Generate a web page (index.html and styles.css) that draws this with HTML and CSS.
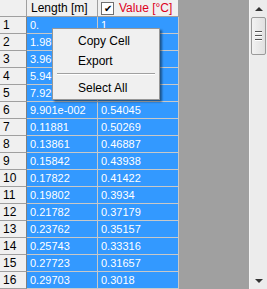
FILE: index.html
```html
<!DOCTYPE html>
<html lang="en">

<head>
    <meta charset="UTF-8">
    <title>Data Grid</title>
    <link rel="stylesheet" href="styles.css">
</head>

<body>
    <div class="window">
        <div class="grid-area">
            <div class="grid">
                <div class="head corner"></div>
                <div class="head">Length [m]</div>
                <div class="head value-head"><span class="check">&#10004;</span>Value [°C]</div>

                <div class="rowhead">1</div><div class="cell">0.</div><div class="cell">1</div>
                <div class="rowhead">2</div><div class="cell">1.980e-002</div><div class="cell"></div>
                <div class="rowhead">3</div><div class="cell">3.960e-002</div><div class="cell"></div>
                <div class="rowhead">4</div><div class="cell">5.940e-002</div><div class="cell"></div>
                <div class="rowhead">5</div><div class="cell">7.920e-002</div><div class="cell"></div>
                <div class="rowhead">6</div><div class="cell">9.901e-002</div><div class="cell">0.54045</div>
                <div class="rowhead">7</div><div class="cell">0.11881</div><div class="cell">0.50269</div>
                <div class="rowhead">8</div><div class="cell">0.13861</div><div class="cell">0.46887</div>
                <div class="rowhead">9</div><div class="cell">0.15842</div><div class="cell">0.43938</div>
                <div class="rowhead">10</div><div class="cell">0.17822</div><div class="cell">0.41422</div>
                <div class="rowhead">11</div><div class="cell">0.19802</div><div class="cell">0.3934</div>
                <div class="rowhead">12</div><div class="cell">0.21782</div><div class="cell">0.37179</div>
                <div class="rowhead">13</div><div class="cell">0.23762</div><div class="cell">0.35157</div>
                <div class="rowhead">14</div><div class="cell">0.25743</div><div class="cell">0.33316</div>
                <div class="rowhead">15</div><div class="cell">0.27723</div><div class="cell">0.31657</div>
                <div class="rowhead">16</div><div class="cell">0.29703</div><div class="cell">0.3018</div>
            </div>

            <!-- Menu contextual sobre la tabla -->
            <div class="menu">
                <div class="menu-item">Copy Cell</div>
                <div class="menu-item">Export</div>
                <div class="menu-sep"></div>
                <div class="menu-item">Select All</div>
            </div>
        </div>

        <div class="scrollbar">
            <div class="arrow arrow-up"></div>
            <div class="thumb">
                <span></span><span></span><span></span>
            </div>
            <div class="track"></div>
            <div class="arrow arrow-down"></div>
        </div>
    </div>
</body>

</html>
```

FILE: styles.css
```css
body {
    margin: 0;
    padding: 0;
    font-family: "Liberation Sans", Arial, sans-serif;
    font-size: 11px;
    background-color: #a0a0a0;
}

.window {
    display: flex;
    width: 267px;
    height: 289px;
    overflow: hidden;
}

.grid-area {
    position: relative;
    flex: 1;
    background-color: #a0a0a0;
}

.grid {
    display: grid;
    grid-template-columns: 27px 71px 81px;
    grid-auto-rows: 17px;
    width: 179px;
}

.head {
    background-color: #f0f0f0;
    color: #000;
    border-right: 1px solid #a0a0a0;
    border-bottom: 1px solid #a0a0a0;
    line-height: 16px;
    padding-left: 4px;
    font-size: 12px;
    white-space: nowrap;
    overflow: hidden;
}

.corner {
    padding: 0;
}

.value-head {
    display: flex;
    align-items: center;
    color: #dd0022;
    padding-left: 3px;
}

.check {
    display: inline-block;
    flex: none;
    width: 11px;
    height: 11px;
    border: 1px solid #707070;
    background-color: #fff;
    color: #000;
    font-size: 10px;
    line-height: 11px;
    text-align: center;
    margin-right: 5px;
}

.rowhead {
    background-color: #f0f0f0;
    color: #000;
    border-right: 1px solid #808080;
    border-bottom: 1px solid #a0a0a0;
    line-height: 16px;
    padding-left: 3px;
    font-size: 12px;
}

.cell {
    background-color: #3399ff;
    color: #fff;
    border-right: 1px solid #c8c8c8;
    border-bottom: 1px solid #c8c8c8;
    line-height: 16px;
    padding-left: 3px;
    white-space: nowrap;
    overflow: hidden;
}

.menu {
    position: absolute;
    left: 52px;
    top: 28px;
    width: 106px;
    padding: 2px 0 1px;
    background-color: #f0f0f0;
    border: 1px solid #979797;
    box-shadow: 2px 2px 2px rgba(0, 0, 0, 0.45);
    color: #000;
}

.menu-item {
    height: 20px;
    line-height: 20px;
    padding-left: 25px;
    font-size: 12px;
}

.menu-sep {
    height: 1px;
    margin: 2px 4px 3px;
    background-color: #a0a0a0;
    border-bottom: 1px solid #fff;
}

.scrollbar {
    width: 17px;
    display: flex;
    flex-direction: column;
    background-color: #ececec;
    border-left: 1px solid #f4f4f4;
}

.arrow {
    height: 17px;
    display: flex;
    align-items: center;
    justify-content: center;
}

.arrow::after {
    content: "";
    width: 0;
    height: 0;
    border-left: 4px solid transparent;
    border-right: 4px solid transparent;
}

.arrow-up::after {
    border-bottom: 4px solid #333;
}

.arrow-down::after {
    border-top: 4px solid #333;
}

.thumb {
    height: 36px;
    margin: 0 1px;
    border: 1px solid #9a9a9a;
    border-radius: 2px;
    background: linear-gradient(to right, #f2f2f2, #e0e0e0);
    display: flex;
    flex-direction: column;
    align-items: center;
    justify-content: center;
    gap: 2px;
}

.thumb span {
    width: 7px;
    height: 1px;
    background-color: #555;
    border-bottom: 1px solid #fff;
}

.track {
    flex: 1;
}
```
